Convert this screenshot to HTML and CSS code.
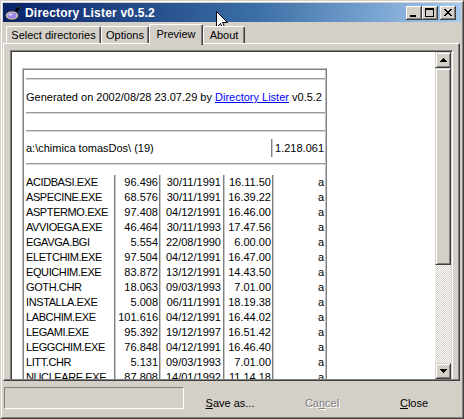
FILE: index.html
```html
<!DOCTYPE html>
<html>
<head>
<meta charset="utf-8">
<title>Directory Lister v0.5.2</title>
<link rel="stylesheet" href="styles.css">
</head>
<body>
<div class="window">
  <div class="titlebar">
    <svg class="appicon" width="16" height="16" viewBox="0 0 16 16">
      <path d="M10 7 L15 1.5" stroke="#000" stroke-width="2.4" fill="none"/>
      <path d="M13 1 L15.5 3.5" stroke="#606060" stroke-width="1" fill="none"/>
      <ellipse cx="7" cy="10.5" rx="6.5" ry="4.6" fill="#c8c8c8" stroke="#303030" stroke-width="1"/>
      <ellipse cx="7" cy="10.5" rx="4.6" ry="3.1" fill="#9c86e4"/>
      <ellipse cx="5.6" cy="9.6" rx="2.2" ry="1.1" fill="#d6ccff"/>
    </svg>
    <span class="title">Directory Lister v0.5.2</span>
    <div class="capbtns">
      <span class="capbtn"><svg width="16" height="14" viewBox="0 0 16 14" shape-rendering="crispEdges"><path d="M4 9h6v2H4z"/></svg></span>
      <span class="capbtn"><svg width="16" height="14" viewBox="0 0 16 14" shape-rendering="crispEdges"><path fill-rule="evenodd" d="M3 2h9v9H3zM4 4v6h7V4z"/></svg></span>
      <span class="capbtn close"><svg width="16" height="14" viewBox="0 0 16 14" shape-rendering="crispEdges"><path d="M4 3h2v1H4zM10 3h2v1h-2zM5 4h2v1H5zM9 4h2v1H9zM6 5h4v1H6zM7 6h2v1H7zM6 7h4v1H6zM5 8h2v1H5zM9 8h2v1H9zM4 9h2v1H4zM10 9h2v1h-2z"/></svg></span>
    </div>
  </div>

  <div class="tabs">
    <div class="tab t1">Select directories</div>
    <div class="tab t2">Options</div>
    <div class="tab sel t3">Preview</div>
    <div class="tab t4">About</div>
  </div>

  <div class="panel">
    <div class="frame">
      <div class="doc">
        <div class="tbl">
          <div class="sp8"></div>
          <div class="hr"></div>
          <div class="gen">Generated on 2002/08/28 23.07.29 by&nbsp;<a class="link">Directory Lister</a>&nbsp;v0.5.2</div>
          <div class="hr"></div>
          <div class="sp16"></div>
          <div class="hr"></div>
          <div class="dir"><span class="dirname">a:\chimica tomasDos\ (19)</span><span class="dirsize">1.218.061</span></div>
          <div class="hr"></div>
          <div class="sp10"></div>
          <div class="files">
            <span class="n">ACIDBASI.EXE</span><span class="s">96.496</span><span class="d">30/11/1991</span><span class="t">16.11.50</span><span class="a">a</span>
            <span class="n">ASPECINE.EXE</span><span class="s">68.576</span><span class="d">30/11/1991</span><span class="t">16.39.22</span><span class="a">a</span>
            <span class="n">ASPTERMO.EXE</span><span class="s">97.408</span><span class="d">04/12/1991</span><span class="t">16.46.00</span><span class="a">a</span>
            <span class="n">AVVIOEGA.EXE</span><span class="s">46.464</span><span class="d">30/11/1993</span><span class="t">17.47.56</span><span class="a">a</span>
            <span class="n">EGAVGA.BGI</span><span class="s">5.554</span><span class="d">22/08/1990</span><span class="t">6.00.00</span><span class="a">a</span>
            <span class="n">ELETCHIM.EXE</span><span class="s">97.504</span><span class="d">04/12/1991</span><span class="t">16.47.00</span><span class="a">a</span>
            <span class="n">EQUICHIM.EXE</span><span class="s">83.872</span><span class="d">13/12/1991</span><span class="t">14.43.50</span><span class="a">a</span>
            <span class="n">GOTH.CHR</span><span class="s">18.063</span><span class="d">09/03/1993</span><span class="t">7.01.00</span><span class="a">a</span>
            <span class="n">INSTALLA.EXE</span><span class="s">5.008</span><span class="d">06/11/1991</span><span class="t">18.19.38</span><span class="a">a</span>
            <span class="n">LABCHIM.EXE</span><span class="s">101.616</span><span class="d">04/12/1991</span><span class="t">16.44.02</span><span class="a">a</span>
            <span class="n">LEGAMI.EXE</span><span class="s">95.392</span><span class="d">19/12/1997</span><span class="t">16.51.42</span><span class="a">a</span>
            <span class="n">LEGGCHIM.EXE</span><span class="s">76.848</span><span class="d">04/12/1991</span><span class="t">16.46.40</span><span class="a">a</span>
            <span class="n">LITT.CHR</span><span class="s">5.131</span><span class="d">09/03/1993</span><span class="t">7.01.00</span><span class="a">a</span>
            <span class="n">NUCLEARE.EXE</span><span class="s">87.808</span><span class="d">14/01/1992</span><span class="t">11.14.18</span><span class="a">a</span>
            <span class="n">PERIODIC.EXE</span><span class="s">64.112</span><span class="d">04/12/1991</span><span class="t">16.48.20</span><span class="a">a</span>
          </div>
        </div>
      </div>
      <div class="vscroll">
        <div class="sbtn"><svg width="7" height="4" viewBox="0 0 7 4" shape-rendering="crispEdges"><path d="M3 0h1v1h1v1h1v1h1v1H0V3h1V2h1V1h1z"/></svg></div>
        <div class="thumb"></div>
        <div class="track"></div>
        <div class="sbtn"><svg width="7" height="4" viewBox="0 0 7 4" shape-rendering="crispEdges"><path d="M0 0h7v1H6v1H5v1H4v1H3V3H2V2H1V1H0z"/></svg></div>
      </div>
    </div>
  </div>

  <div class="footer">
    <div class="status"></div>
    <div class="btn"><span><u>S</u>ave as...</span></div>
    <div class="btn disabled"><span>Ca<u>n</u>cel</span></div>
    <div class="btn"><span><u>C</u>lose</span></div>
  </div>
</div>
<svg class="cursor" width="13" height="20" viewBox="0 0 13 20">
  <path d="M0.5 0.5 L0.5 16.5 L4.5 12.5 L7.5 18.5 L9.5 17.5 L6.5 11.5 L11.5 11.5 Z" fill="#fff" stroke="#000" stroke-width="1"/>
</svg>
</body>
</html>
```

FILE: styles.css
```css
html, body {
  margin: 0;
  padding: 0;
}
body {
  background: #d4d0c8;
  font-family: "Liberation Sans", Arial, sans-serif;
  font-size: 11px;
  color: #000;
  position: relative;
}

.window {
  width: 464px;
  height: 419px;
  box-sizing: border-box;
  border: 1px solid;
  border-color: #d4d0c8 #404040 #404040 #d4d0c8;
  box-shadow: inset 1px 1px 0 #fff, inset -1px -1px 0 #808080;
  padding: 2px;
  background: #d4d0c8;
  display: flex;
  flex-direction: column;
}

/* title bar */
.titlebar {
  height: 19px;
  flex: none;
  display: flex;
  align-items: center;
  padding: 0 5px 0 2px;
  background: linear-gradient(to right, #0a246a 0%, #3a6ea5 55%, #a6caf0 100%);
}
.appicon {
  flex: none;
  display: block;
}
.title {
  margin-left: 4px;
  color: #fff;
  font-weight: bold;
  font-size: 12px;
  letter-spacing: 0.2px;
}
.capbtns {
  margin-left: auto;
  display: flex;
}
.capbtn {
  width: 16px;
  height: 14px;
  background: #d4d0c8;
  box-shadow: inset -1px -1px 0 #404040, inset 1px 1px 0 #fff, inset -2px -2px 0 #808080;
  display: block;
}
.capbtn svg {
  display: block;
}
.capbtn.close {
  margin-left: 2px;
}

/* tabs */
.tabs {
  height: 21px;
  flex: none;
  display: flex;
  align-items: flex-end;
  padding-left: 3px;
  position: relative;
  z-index: 1;
}
.tab {
  height: 17px;
  box-sizing: border-box;
  border-top: 1px solid #fff;
  border-left: 1px solid #fff;
  border-right: 1px solid #404040;
  box-shadow: inset -1px 0 0 #808080;
  border-top-left-radius: 2px;
  border-top-right-radius: 2px;
  background: #d4d0c8;
  display: flex;
  align-items: center;
  justify-content: center;
  white-space: nowrap;
}
.tab.sel {
  height: 21px;
  margin-bottom: -2px;
  padding-bottom: 2px;
}
.t1 { width: 95px; }
.t2 { width: 48px; }
.t3 { width: 54px; }
.t4 { width: 42px; }

/* page panel */
.panel {
  flex: none;
  margin-right: 1px;
  border-top: 1px solid #fff;
  border-left: 1px solid #fff;
  border-right: 1px solid #404040;
  border-bottom: 1px solid #404040;
  box-shadow: inset -1px -1px 0 #808080;
  padding: 6px 6px 1px 6px;
}
.frame {
  display: flex;
  border-top: 1px solid #808080;
  border-left: 1px solid #808080;
  border-right: 1px solid #fff;
  box-shadow: inset 1px 1px 0 #404040, inset -1px 0 0 #d4d0c8;
  padding: 1px 1px 0 1px;
}
.doc {
  flex: 1;
  height: 327px;
  overflow: hidden;
  background: #fff;
  box-sizing: border-box;
  padding: 16px 0 0 10px;
}

/* html table look */
.tbl {
  width: 305px;
  box-sizing: border-box;
  border-top: 1px solid #c0c0c0;
  border-left: 1px solid #c0c0c0;
  border-right: 1px solid #808080;
  box-shadow: inset 1px 1px 0 #808080, inset -1px 0 0 #c0c0c0;
  padding: 1px 1px 0 1px;
}
.sp8 { height: 8px; }
.sp16 { height: 16px; }
.sp10 { height: 10px; }
.hr {
  height: 2px;
  box-sizing: border-box;
  margin-left: 2px;
  border-top: 1px solid #9a9a9a;
  border-bottom: 1px solid #d4d4d4;
}
.gen {
  height: 32px;
  box-sizing: border-box;
  padding: 2px 0 0 2px;
  display: flex;
  align-items: center;
  white-space: nowrap;
}
.link {
  color: #0000ff;
  text-decoration: underline;
}
.dir {
  height: 31px;
  display: flex;
  align-items: center;
  white-space: nowrap;
}
.dirname {
  flex: 1;
  padding-left: 2px;
}
.dirsize {
  width: 52px;
  height: 18px;
  line-height: 18px;
  border-left: 1px solid #808080;
  box-shadow: inset 1px 0 0 #c8c8c8;
  text-align: right;
  padding-right: 1px;
  margin-top: 1px;
}
.files {
  display: grid;
  grid-template-columns: 91px 45px 64px 49px 52px;
  grid-auto-rows: 15px;
  line-height: 15px;
}
.files span {
  box-sizing: border-box;
  white-space: nowrap;
  overflow: hidden;
  border-right: 1px solid #808080;
  box-shadow: 1px 0 0 #c8c8c8;
}
.files .n {
  padding-left: 2px;
  letter-spacing: -0.4px;
}
.files .s,
.files .d,
.files .t,
.files .a {
  text-align: right;
  padding-right: 1px;
}
.files .d {
  padding-right: 2px;
}
.files .a {
  border-right: none;
  box-shadow: none;
}

/* scrollbar */
.vscroll {
  width: 16px;
  flex: none;
  display: flex;
  flex-direction: column;
}
.sbtn,
.thumb {
  box-sizing: border-box;
  background: #d4d0c8;
  border: 1px solid;
  border-color: #d4d0c8 #404040 #404040 #d4d0c8;
  box-shadow: inset 1px 1px 0 #fff, inset -1px -1px 0 #808080;
}
.sbtn {
  height: 16px;
  display: flex;
  align-items: center;
  justify-content: center;
}
.sbtn svg {
  display: block;
}
.thumb {
  height: 197px;
}
.track {
  flex: 1;
  background-color: #fff;
  background-image: conic-gradient(#d4d0c8 0 25%, #fff 0 50%, #d4d0c8 0 75%, #fff 0);
  background-size: 2px 2px;
}

/* footer */
.footer {
  flex: 1;
  display: flex;
  align-items: flex-start;
  padding: 6px 0 0 1px;
}
.status {
  width: 180px;
  height: 22px;
  box-sizing: border-box;
  border: 1px solid;
  border-color: #808080 #fff #fff #808080;
}
.btn {
  width: 92px;
  height: 25px;
  margin-top: 3px;
  display: flex;
  align-items: center;
  justify-content: center;
  white-space: nowrap;
}
.btn.disabled {
  color: #808080;
  text-shadow: 1px 1px 0 #fff;
}

/* mouse pointer over the title bar */
.cursor {
  position: absolute;
  left: 216px;
  top: 11px;
}
```
